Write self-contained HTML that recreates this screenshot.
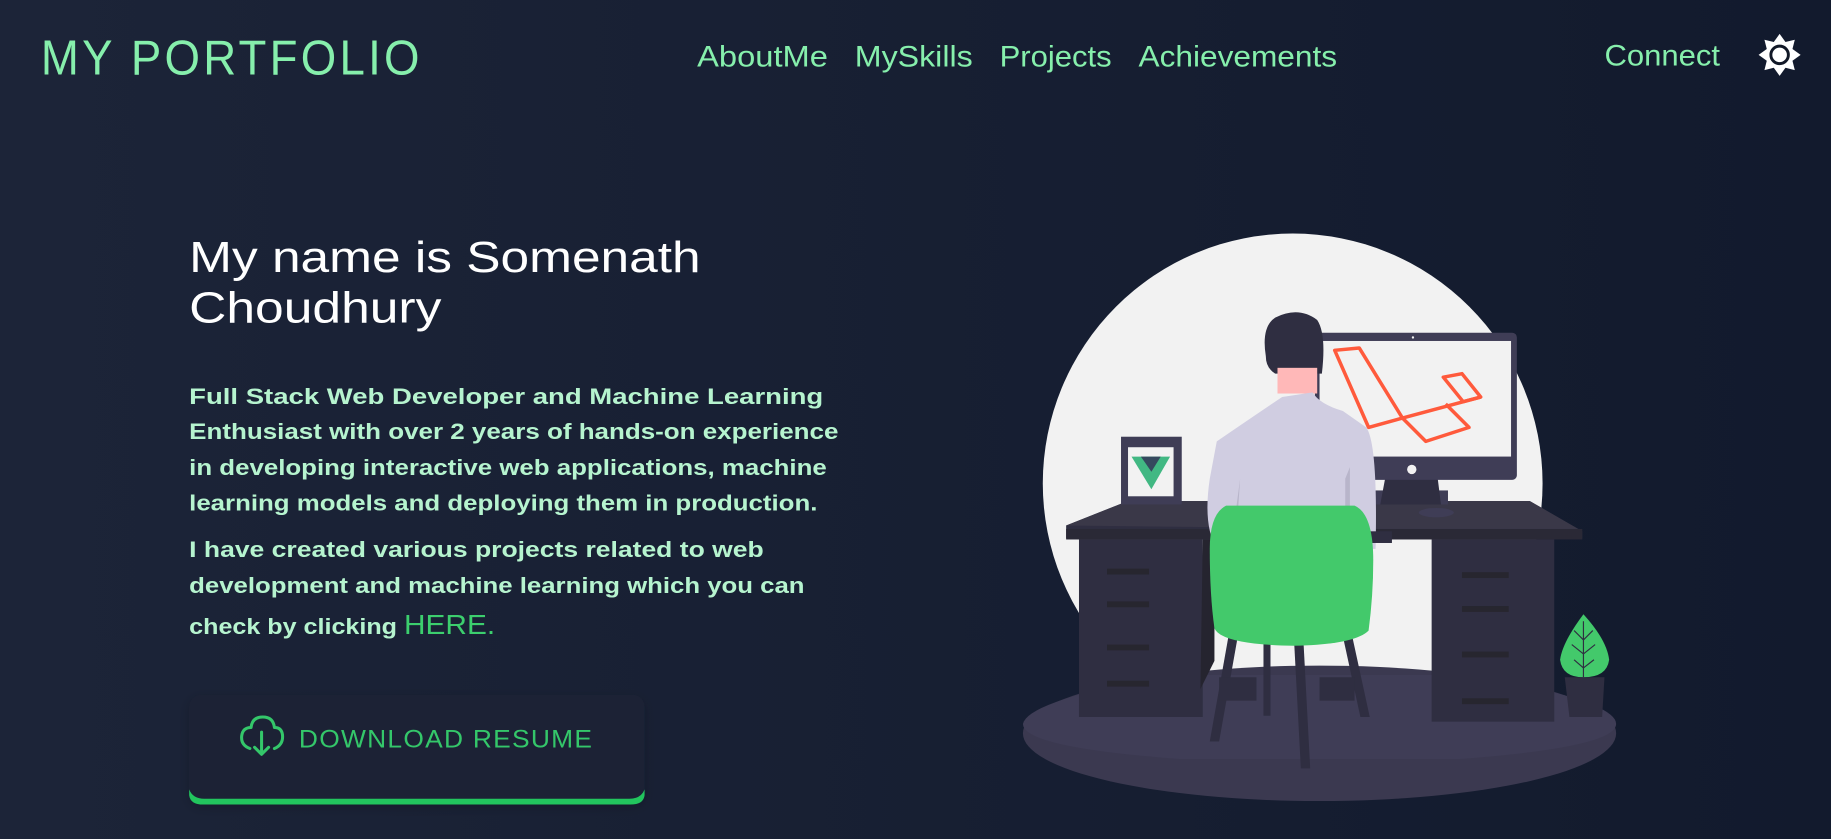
<!DOCTYPE html>
<html><head><meta charset="utf-8"><style>
html,body{margin:0;padding:0;width:1831px;height:839px;overflow:hidden;background:linear-gradient(to right,#1c2438,#121a2d);}
svg{position:absolute;left:0;top:0;}
</style></head><body>
<svg width="1831" height="839" viewBox="0 0 1568 718.5" preserveAspectRatio="none" xmlns="http://www.w3.org/2000/svg" font-family="Liberation Sans, sans-serif">
<defs><filter id="sh" x="-20%" y="-20%" width="140%" height="140%"><feDropShadow dx="0" dy="3" stdDeviation="5" flood-color="#000" flood-opacity="0.2"/></filter></defs>
<!-- header -->
<text x="35" y="64" font-size="42" fill="#86efac" textLength="327" lengthAdjust="spacingAndGlyphs" letter-spacing="3">MY PORTFOLIO</text>
<g font-size="25" fill="#86efac">
<text x="597" y="57" textLength="112" lengthAdjust="spacingAndGlyphs">AboutMe</text>
<text x="732" y="57" textLength="101" lengthAdjust="spacingAndGlyphs">MySkills</text>
<text x="856" y="57" textLength="96" lengthAdjust="spacingAndGlyphs">Projects</text>
<text x="975" y="57" textLength="170" lengthAdjust="spacingAndGlyphs">Achievements</text>
<text x="1374" y="56" textLength="99" lengthAdjust="spacingAndGlyphs">Connect</text>
</g>
<g transform="translate(1524,47)">
<polygon fill="#fff" points="0,-18 5,-11 13,-13 11,-5 18,0 11,5 13,13 5,11 0,18 -5,11 -13,13 -11,5 -18,0 -11,-5 -13,-13 -5,-11"/>
<circle r="7.5" fill="#fff" stroke="#111827" stroke-width="2.5"/>
</g>
<!-- heading -->
<g fill="#fff" font-size="37">
<text x="162" y="233" textLength="438" lengthAdjust="spacingAndGlyphs">My name is Somenath</text>
<text x="162" y="276" textLength="216" lengthAdjust="spacingAndGlyphs">Choudhury</text>
</g>
<g fill="#b6f4cf" font-size="19" font-weight="bold">
<text x="162" y="346" textLength="543" lengthAdjust="spacingAndGlyphs">Full Stack Web Developer and Machine Learning</text>
<text x="162" y="376" textLength="556" lengthAdjust="spacingAndGlyphs">Enthusiast with over 2 years of hands-on experience</text>
<text x="162" y="407" textLength="546" lengthAdjust="spacingAndGlyphs">in developing interactive web applications, machine</text>
<text x="162" y="437" textLength="538" lengthAdjust="spacingAndGlyphs">learning models and deploying them in production.</text>
<text x="162" y="477" textLength="492" lengthAdjust="spacingAndGlyphs">I have created various projects related to web</text>
<text x="162" y="508" textLength="527" lengthAdjust="spacingAndGlyphs">development and machine learning which you can</text>
<text x="162" y="543" textLength="178" lengthAdjust="spacingAndGlyphs">check by clicking</text>
</g>
<text x="346" y="543" font-size="24" fill="#3ccf6e" textLength="78" lengthAdjust="spacingAndGlyphs">HERE.</text>
<!-- button -->
<rect x="162" y="595" width="390" height="93" rx="10" fill="#1a2234" filter="url(#sh)"/>
<path d="M162 676 Q165 684 175 684 L539 684 Q549 684 552 676 L552 681 Q551 689 540 689 L174 689 Q163 689 162 681Z" fill="#22c55e"/>
<text x="256" y="640" font-size="21" fill="#34c76a" textLength="252" lengthAdjust="spacingAndGlyphs" letter-spacing="1">DOWNLOAD RESUME</text>
<g fill="none" stroke="#34c76a" stroke-width="2.6" stroke-linecap="round" stroke-linejoin="round">
<path d="M214 641 Q206 638 207 630 Q208 623 215 623 Q216 614 225 614 Q234 614 235 623 Q242 623 242 631 Q242 638 235 641"/>
<path d="M224 627 L224 645 M218 640 L224 646 L230 640"/>
</g>
<!-- illustration -->
<circle cx="1107" cy="414" r="214" fill="#f2f2f2"/>
<ellipse cx="1130" cy="628" rx="254" ry="58" fill="#3b3950"/>
<path d="M876 620 Q880 600 1000 578 L1260 578 Q1384 600 1384 620 Q1384 640 1250 650 L1010 650 Q876 640 876 620Z" fill="#3f3d56"/>
<!-- chair legs -->
<g fill="#2f2e41">
<polygon points="1052,545 1060,545 1044,635 1036,635"/>
<polygon points="1108,545 1116,545 1122,658 1114,658"/>
<polygon points="1150,545 1158,545 1173,614 1165,614"/>
<polygon points="1082,545 1088,545 1088,613 1082,613"/>
<rect x="1044" y="580" width="32" height="20"/>
<rect x="1130" y="580" width="30" height="20"/>
</g>
<!-- desk -->
<polygon points="913,450 966,429 1310,429 1355,455 1355,461 913,461" fill="#2f2e41"/>
<polygon points="913,450 966,429 1310,429 1355,455" fill="#3a3848"/>
<rect x="913" y="453" width="442" height="9" fill="#2a2936"/>
<rect x="924" y="462" width="106" height="152" fill="#2f2e41"/>
<rect x="1226" y="462" width="105" height="156" fill="#2f2e41"/>
<polygon points="1030,462 1040,462 1040,566 1028,590" fill="#25242f"/>
<g fill="#27262f">
<rect x="948" y="487" width="36" height="5"/><rect x="948" y="515" width="36" height="5"/><rect x="948" y="552" width="36" height="5"/><rect x="948" y="583" width="36" height="5"/>
<rect x="1252" y="490" width="40" height="5"/><rect x="1252" y="519" width="40" height="5"/><rect x="1252" y="558" width="40" height="5"/><rect x="1252" y="598" width="40" height="5"/>
</g>
<!-- monitor -->
<rect x="1175" y="420" width="65" height="12" fill="#3f3d56"/>
<polygon points="1188,400 1230,400 1234,432 1182,432" fill="#2f2e41"/>
<rect x="1126" y="285" width="173" height="126" rx="4" fill="#3f3d56"/>
<rect x="1130" y="292" width="164" height="99" fill="#f2f2f2"/>
<circle cx="1209" cy="402" r="4" fill="#f2f2f2"/>
<circle cx="1210" cy="289" r="1" fill="#f2f2f2"/>
<ellipse cx="1230" cy="439" rx="15" ry="4" fill="#3f3d56"/>
<g fill="none" stroke="#ff5a3c" stroke-width="3" stroke-linejoin="round">
<polygon points="1143,300 1164,298 1201,358 1172,366"/>
<polyline points="1201,358 1221,378 1258,366 1238,346"/>
<polyline points="1201,358 1268,340"/>
<polygon points="1236,323 1252,320 1268,340 1253,344"/>
</g>
<!-- vue frame -->
<rect x="960" y="374" width="52" height="58" fill="#3f3d56"/>
<rect x="966" y="383" width="39" height="42" fill="#f2f2f2"/>
<polygon points="969,391 1002,391 986,419" fill="#41b883"/>
<polygon points="977,391 994,391 986,404" fill="#35495e"/>
<!-- person -->
<path d="M1084 305 Q1080 280 1092 272 Q1112 262 1128 274 Q1136 286 1132 320 L1092 320 Q1084 315 1084 305Z" fill="#2f2e41"/>
<rect x="1094" y="315" width="34" height="22" fill="#ffb8b8"/>
<path d="M1098 340 L1124 336 Q1130 346 1150 352 L1170 366 Q1180 380 1178 470 L1160 470 Q1150 480 1062 480 L1042 470 Q1030 450 1036 410 L1042 378 Q1080 352 1098 340Z" fill="#d0cde1"/>
<path d="M1062 410 L1058 470 L1054 470Z" fill="#b8b5ca"/>
<path d="M1156 400 L1156 470 L1152 470 L1152 410Z" fill="#b8b5ca"/>
<rect x="1170" y="455" width="22" height="10" fill="#2f2e41"/>
<!-- chair -->
<path d="M1050 433 L1160 433 Q1176 440 1176 480 Q1176 510 1172 540 Q1160 552 1108 553 Q1046 552 1040 538 Q1036 510 1036 470 Q1036 440 1050 433Z" fill="#43c96b"/>
<!-- plant -->
<path d="M1356 526 Q1338 550 1336 565 Q1338 580 1356 580 Q1376 580 1378 565 Q1376 548 1356 526Z" fill="#43c96b"/>
<path d="M1356 532 L1356 580 M1356 548 L1348 540 M1356 548 L1364 540 M1356 560 L1346 552 M1356 560 L1366 552 M1356 572 L1348 565 M1356 572 L1365 565" stroke="#2f2e41" stroke-width="1" fill="none"/>
<polygon points="1340,580 1374,580 1372,614 1344,614" fill="#2f2e41"/>
</svg>
</body></html>
